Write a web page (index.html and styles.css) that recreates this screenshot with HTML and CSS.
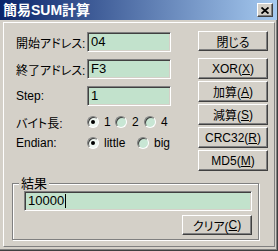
FILE: index.html
```html
<!DOCTYPE html>
<html lang="ja">
<head>
<meta charset="utf-8">
<title>簡易SUM計算</title>
<link rel="stylesheet" href="styles.css">
</head>
<body>
<div class="window">
  <div class="titlebar">
    <span class="title">簡易SUM計算</span>
    <span class="close"><svg width="8" height="7" viewBox="0 0 8 7"><path d="M0.5 0.5 L7.5 6.5 M7.5 0.5 L0.5 6.5" stroke="#000" stroke-width="1.8" fill="none"/></svg></span>
  </div>
  <div class="client">
    <div class="top">
      <div class="fields">
        <div class="row"><span class="label">開始アドレス:</span><div class="edit">04</div></div>
        <div class="row"><span class="label">終了アドレス:</span><div class="edit">F3</div></div>
        <div class="row"><span class="label">Step:</span><div class="edit">1</div></div>
        <div class="radiorow first">
          <span class="label">バイト長:</span>
          <span class="radio w28"><span class="dot on"></span>1</span>
          <span class="radio w29"><span class="dot"></span>2</span>
          <span class="radio"><span class="dot"></span>4</span>
        </div>
        <div class="radiorow">
          <span class="label">Endian:</span>
          <span class="radio w50"><span class="dot on"></span>little</span>
          <span class="radio"><span class="dot"></span>big</span>
        </div>
      </div>
      <div class="buttons">
        <div class="btn close-btn">閉じる</div>
        <div class="btn">XOR(<u>X</u>)</div>
        <div class="btn">加算(<u>A</u>)</div>
        <div class="btn">減算(<u>S</u>)</div>
        <div class="btn">CRC32(<u>R</u>)</div>
        <div class="btn">MD5(<u>M</u>)</div>
      </div>
    </div>
    <div class="group">
      <span class="legend">結果</span>
      <div class="edit result">10000<span class="caret"></span></div>
      <div class="group-foot"><div class="btn">クリア(<u>C</u>)</div></div>
    </div>
  </div>
</div>
</body>
</html>
```

FILE: styles.css
```css
html, body {
  margin: 0;
  padding: 0;
  background: #d4d0c8;
}
body {
  font-family: "Liberation Sans", "Noto Sans CJK JP", sans-serif;
  font-size: 12px;
  font-feature-settings: "palt";
  color: #000;
}
.window {
  width: 278px;
  height: 251px;
  box-sizing: border-box;
  background: #d4d0c8;
  display: flex;
  flex-direction: column;
  border-right: 1px solid #404040;
  border-bottom: 1px solid #404040;
  box-shadow: inset -1px -1px 0 #808080;
}
.titlebar {
  height: 20px;
  flex: none;
  display: flex;
  align-items: center;
  justify-content: space-between;
  background: linear-gradient(to right, #0a246a, #a6caf0);
  padding: 0 4px 0 3px;
}
.title {
  color: #fff;
  font-weight: bold;
  font-size: 14px;
  line-height: 20px;
}
.close {
  width: 16px;
  height: 14px;
  box-sizing: border-box;
  background: #d4d0c8;
  border-top: 1px solid #fff;
  border-left: 1px solid #fff;
  border-right: 1px solid #404040;
  border-bottom: 1px solid #404040;
  box-shadow: inset -1px -1px 0 #808080;
  display: flex;
  align-items: center;
  justify-content: center;
}
.client {
  flex: 1;
  margin: 2px 2px 3px 3px;
  border-top: 1px solid #fff;
  border-left: 1px solid #fff;
  border-right: 1px solid #808080;
  border-bottom: 1px solid #808080;
  padding: 8px 6px 0 8px;
}
.top {
  display: flex;
  justify-content: space-between;
}
.fields {
  padding-top: 1px;
  padding-left: 4px;
  display: flex;
  flex-direction: column;
}
.row {
  display: flex;
  align-items: center;
  height: 20px;
  margin-bottom: 7px;
}
.label {
  width: 71px;
  flex: none;
  white-space: nowrap;
}
.edit {
  width: 84px;
  height: 20px;
  box-sizing: border-box;
  background: #c2e2cc;
  border-top: 1px solid #808080;
  border-left: 1px solid #808080;
  border-right: 1px solid #fff;
  border-bottom: 1px solid #fff;
  box-shadow: inset 1px 1px 0 #404040, inset -1px -1px 0 #d4d0c8;
  padding: 0 0 0 3px;
  line-height: 18px;
  font-size: 13px;
  display: flex;
  align-items: center;
}
.radiorow {
  display: flex;
  align-items: center;
  height: 16px;
  margin-bottom: 5px;
}
.radiorow.first {
  margin-top: 1px;
}
.radio {
  display: flex;
  align-items: center;
  gap: 5px;
  flex: none;
}
.w28 { width: 28px; }
.w29 { width: 29px; }
.w50 { width: 50px; }
.dot {
  width: 12px;
  height: 12px;
  box-sizing: border-box;
  border-radius: 50%;
  background: #c8e6d4;
  border: 1px solid;
  border-color: #808080 #fff #fff #808080;
  box-shadow: inset 1px 1px 0 #404040;
  display: flex;
  align-items: center;
  justify-content: center;
}
.dot.on {
  background: #eef6f0;
}
.dot.on::after {
  content: "";
  width: 4px;
  height: 4px;
  border-radius: 50%;
  background: #000;
}
.buttons {
  width: 70px;
  display: flex;
  flex-direction: column;
  gap: 2px;
}
.btn {
  height: 21px;
  box-sizing: border-box;
  background: #d4d0c8;
  border-top: 1px solid #fff;
  border-left: 1px solid #fff;
  border-right: 1px solid #404040;
  border-bottom: 1px solid #404040;
  box-shadow: inset -1px -1px 0 #808080;
  display: flex;
  align-items: center;
  justify-content: center;
  white-space: nowrap;
}
.close-btn {
  height: 20px;
  margin-bottom: 5px;
}
.group {
  position: relative;
  margin: 12px 9px 0 0;
  height: 57px;
  box-sizing: border-box;
  border: 1px solid #808080;
  box-shadow: inset 1px 1px 0 #fff, 1px 1px 0 #fff;
  padding: 7px 6px 0 11px;
}
.legend {
  position: absolute;
  top: -8px;
  left: 6px;
  padding: 0 2px;
  background: #d4d0c8;
  font-size: 13px;
  line-height: 15px;
}
.edit.result {
  width: auto;
}
.caret {
  width: 1px;
  height: 14px;
  background: #000;
  margin-left: 1px;
}
.group-foot {
  display: flex;
  justify-content: flex-end;
  margin-top: 4px;
}
.group-foot .btn {
  width: 70px;
  height: 20px;
}
```
